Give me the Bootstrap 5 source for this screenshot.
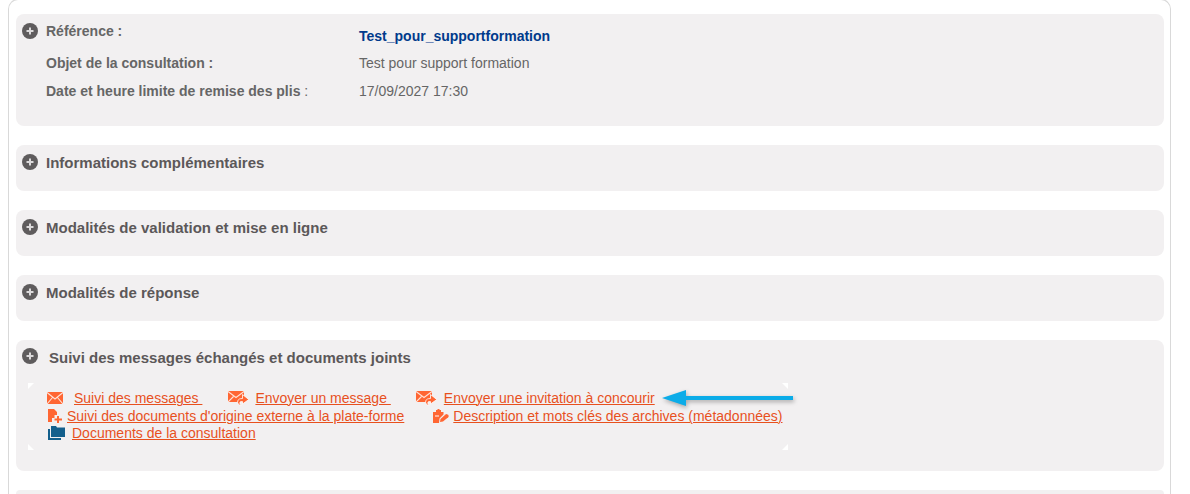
<!DOCTYPE html>
<html lang="fr">
<head>
    <meta charset="UTF-8" />
    <title>Consultation</title>
    <meta name="viewport" content="width=device-width, initial-scale=1" />
    <link href="https://cdn.jsdelivr.net/npm/bootstrap@5.3.0/dist/css/bootstrap.min.css" rel="stylesheet" />
    <style>
    html, body { height: 494px; overflow: hidden; }
    body {
      background: #fff;
      font-family: "Liberation Sans", Arial, sans-serif;
      font-size: 14px;
      color: #666;
      padding: 0 19px 0 8px;
    }
    .outer-frame {
      border: 1px solid #d9d9d9;
      border-bottom: 0;
      border-radius: 10px 10px 0 0;
      margin-top: -1px;
      padding: 14px 6px 0 7px;
      height: 495px;
    }
    .fold-panel {
      background: #f2f0f1;
      border-radius: 8px;
      margin-bottom: 19px;
      padding: 0 6px;
    }
    .panel-ref { height: 112px; padding-top: 8px; }
    .panel-closed { height: 46px; padding-top: 9px; }
    .panel-suivi { height: 131px; padding-top: 9px; }
    .panel-next { height: 4px; margin-bottom: 0; border-radius: 8px 8px 0 0; }
    .plus-dot { width: 16px; height: 16px; flex: none; margin-right: 8px; }
    .plus-first { margin-top: 1px; }
    .plus-suivi { margin-top: -1px; margin-right: 11px; }
    .fold-title { font-weight: 700; font-size: 15px; color: #5c5859; line-height: 18px; }
    .ref-row { line-height: 18px; }
    .row-objet { margin-top: 14px; padding-left: 24px; }
    .row-date { margin-top: 10px; padding-left: 24px; }
    .ref-label { width: 313px; flex: none; font-weight: 700; color: #666; }
    .ref-label span { font-weight: 400; }
    .ref-code { font-weight: 700; color: #003a8c; position: relative; top: 5px; }
    .links-box {
      position: relative;
      margin: 16px 0 0 6px;
      width: 760px;
      height: 67px;
      padding-top: 6px;
      line-height: 18px;
    }
    .corner-mark { position: absolute; width: 6px; height: 6px; background: #fff; }
    .corner-mark.tl { left: 0; top: 0; clip-path: polygon(0 0, 100% 0, 0 100%); }
    .corner-mark.tr { right: 0; top: 0; clip-path: polygon(0 0, 100% 0, 100% 100%); }
    .corner-mark.bl { left: 0; bottom: 0; clip-path: polygon(0 0, 100% 100%, 0 100%); }
    .corner-mark.br { right: 0; bottom: 0; clip-path: polygon(100% 0, 100% 100%, 0 100%); }
    .link-row { display: flex; align-items: center; height: 18px; }
    .link-row.row-last { height: 17px; margin-top: -1px; }
    .link-row a { color: #e8501e; white-space: pre; text-decoration-thickness: 1px; }
    .link-row svg { flex: none; }
    .ico-mail { margin-left: 19px; margin-right: 11px; }
    .ico-send { margin-left: 26px; margin-right: 6px; }
    .ico-send-b { margin-left: 25px; margin-right: 7px; }
    .ico-doc { margin-left: 20px; margin-right: 5px; }
    .ico-clip { margin-left: 29px; margin-right: 4px; }
    .ico-folder { margin-left: 20px; margin-right: 7px; }
    .blue-arrow { position: absolute; left: 634px; top: 7px; filter: drop-shadow(1px 2px 2px rgba(0,0,0,.3)); }
    .icon-defs { position: absolute; }
    </style>
</head>
<body>
<div class="outer-frame">

    <div class="fold-panel panel-ref">
        <div class="d-flex ref-row">
            <svg class="plus-dot plus-first" viewBox="0 0 16 16"><use href="#plus-icon" /></svg>
            <div class="ref-label">Référence :</div>
            <div class="ref-code">Test_pour_supportformation</div>
        </div>
        <div class="d-flex ref-row row-objet">
            <div class="ref-label">Objet de la consultation :</div>
            <div>Test pour support formation</div>
        </div>
        <div class="d-flex ref-row row-date">
            <div class="ref-label">Date et heure limite de remise des plis <span>:</span></div>
            <div>17/09/2027 17:30</div>
        </div>
    </div>

    <div class="fold-panel panel-closed d-flex align-items-start">
        <svg class="plus-dot" viewBox="0 0 16 16"><use href="#plus-icon" /></svg>
        <div class="fold-title">Informations complémentaires</div>
    </div>
    <div class="fold-panel panel-closed d-flex align-items-start">
        <svg class="plus-dot" viewBox="0 0 16 16"><use href="#plus-icon" /></svg>
        <div class="fold-title">Modalités de validation et mise en ligne</div>
    </div>
    <div class="fold-panel panel-closed d-flex align-items-start">
        <svg class="plus-dot" viewBox="0 0 16 16"><use href="#plus-icon" /></svg>
        <div class="fold-title">Modalités de réponse</div>
    </div>

    <div class="fold-panel panel-suivi">
        <div class="d-flex align-items-start">
            <svg class="plus-dot plus-suivi" viewBox="0 0 16 16"><use href="#plus-icon" /></svg>
            <div class="fold-title">Suivi des messages échangés et documents joints</div>
        </div>
        <div class="links-box">
            <i class="corner-mark tl"></i><i class="corner-mark tr"></i><i class="corner-mark bl"></i><i class="corner-mark br"></i>
            <div class="link-row">
                <svg class="ico-mail" width="16" height="12" viewBox="0 0 16 12"><use href="#mail-icon" /></svg>
                <a href="#">Suivi des messages </a>
                <svg class="ico-send" width="21" height="15" viewBox="0 0 21 15"><use href="#mail-send-icon" /></svg>
                <a href="#">Envoyer un message </a>
                <svg class="ico-send-b" width="21" height="15" viewBox="0 0 21 15"><use href="#mail-send-icon" /></svg>
                <a href="#">Envoyer une invitation à concourir</a>
            </div>
            <div class="link-row">
                <svg class="ico-doc" width="14" height="14" viewBox="0 0 14 14">
                    <path fill="#ff6633" d="M0 0h6l3 3v3H6.500v3H4v4H0z"/>
                    <path fill="#ff6633" d="M9 7h2v2.500h3v2h-3V14H9v-2.500H6.500v-2H9z"/>
                </svg>
                <a href="#">Suivi des documents d'origine externe à la plate-forme</a>
                <svg class="ico-clip" width="16" height="14" viewBox="0 0 16 14">
                    <path fill="#ff6633" d="M0 3h3V1h1.500V0h2v1H8v2h2.500v2.500L6.500 9.500 6 14H0z"/>
                    <path fill="#fff" d="M2 6.500h4v1H2z"/>
                    <path fill="#ff6633" d="M7.500 10 12.500 5.500q1-.800 2 0l1 1q.500 1-.300 1.800L10 12.500 7 13z"/>
                </svg>
                <a href="#">Description et mots clés des archives (métadonnées)</a>
            </div>
            <div class="link-row row-last">
                <svg class="ico-folder" width="17" height="14" viewBox="0 0 17 14">
                    <path fill="#135f8c" d="M0 3h2v9h11v2H0z"/>
                    <path fill="#135f8c" d="M3 0h5l1 1.500h8V11H3z"/>
                </svg>
                <a href="#">Documents de la consultation</a>
            </div>
            <svg class="blue-arrow" width="131" height="16" viewBox="0 0 131 16"><path fill="#0cace8" d="M0 8 24 0v6h107v4H24v6z"/></svg>
        </div>
    </div>

    <div class="fold-panel panel-next"></div>
</div>

<svg width="0" height="0" class="icon-defs">
    <defs>
        <symbol id="plus-icon" viewBox="0 0 16 16">
            <circle cx="8" cy="8" r="8" fill="#5f5c5d" />
            <path fill="#dcdadb" d="M7 4.500h2V7h2.500v2H9v2.500H7V9H4.500V7H7z" />
        </symbol>
        <symbol id="mail-icon" viewBox="0 0 16 12">
            <rect width="16" height="12" rx="1" fill="#ff6633" />
            <path fill="none" stroke="#ffe3d8" stroke-width="1.100" d="M0 .5 8 7l8-6.500M0 12l5.500-6.500M16 12l-5.500-6.500" />
        </symbol>
        <symbol id="mail-send-icon" viewBox="0 0 21 15">
            <rect y="0" width="16" height="11" rx="1" fill="#ff6633" />
            <path fill="none" stroke="#ffe3d8" stroke-width="1.100" d="M0 .5 8 6.500l8-6M0 11l5.500-5.500" />
            <path fill="#ff6633" stroke="#fff" stroke-width=".8" d="M14.500 3.500 20.800 8.500 14.500 13v-2.500h-2c-1 .800-.800 2.500.500 4-2.700-.500-4-2.500-3.200-4.700.500-1.500 2-2.300 4.700-2.300z" />
        </symbol>
    </defs>
</svg>
</body>
</html>
